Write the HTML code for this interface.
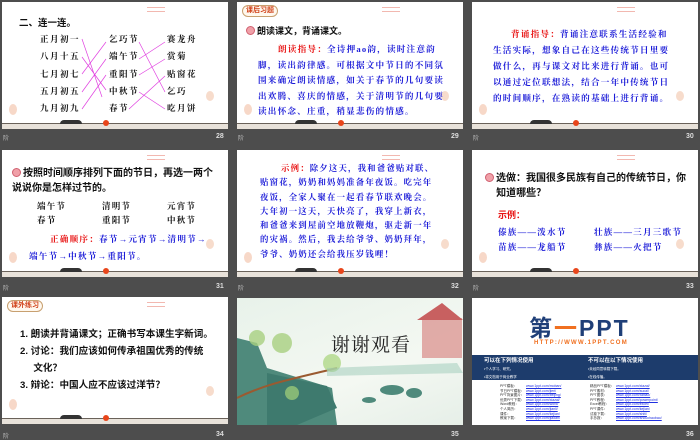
<!DOCTYPE html><html><head><meta charset="utf-8"><style>
body{margin:0;width:700px;height:438px;background:#4d4d4d;position:relative;overflow:hidden;font-family:"Liberation Sans","Noto Sans CJK SC",sans-serif}
.s{position:absolute;width:226px;height:127px;background:#fff;overflow:hidden}
.s .g{position:absolute;left:0;right:0;bottom:0;height:5px;background:#e8e2da;border-top:1px solid #6a625a}
.s .b{position:absolute;left:58px;bottom:5px;width:22px;height:4px;background:#333;border-radius:8px 8px 0 0}
.s .sun{position:absolute;left:101px;bottom:3px;width:6px;height:6px;border-radius:50%;background:#e8451a}
.s .c{position:absolute;left:145px;top:5px;width:18px;height:3px;border-top:1px solid #f2b8b0;border-bottom:1px solid #f2b8b0}
.s .l1{position:absolute;left:7px;bottom:14px;width:8px;height:11px;border-radius:50%;background:#f7d8c8}
.s .l2{position:absolute;right:14px;bottom:28px;width:8px;height:10px;border-radius:50%;background:#f7dccc}
.t{position:absolute;white-space:nowrap;font-size:8px;line-height:13px}
.bl{color:#1c1cd8;font-family:"Liberation Serif","Noto Serif CJK SC",serif;font-weight:bold}
.k{color:#111;font-weight:bold}
.r{color:#e81010;font-weight:bold}
.n{position:absolute;color:#ddd;font-size:7px;font-weight:bold}
.h{position:absolute;color:#bbb;font-size:6px}
.tag{position:absolute;left:5px;top:3px;border:1px solid #c8a070;border-radius:6px;color:#d04018;font-size:7px;font-weight:bold;padding:0 3px;line-height:10px;background:#fff8ee}
.dot{display:inline-block;width:7px;height:7px;border-radius:50%;background:#f0a0a8;border:1px solid #d06070;vertical-align:-1px;margin-right:2px}
.w{font-size:9px;letter-spacing:1.2px}
</style></head><body>

<div class="s" style="left:2px;top:2px">
<div class="c"></div><div class="l1"></div><div class="l2"></div>
<div class="t k" style="left:17px;top:15px;font-size:9.5px">二、连一连。</div>
<div class="t k" style="left:38px;top:29px;line-height:17.3px;font-size:8.5px;letter-spacing:1.5px;font-family:'Liberation Serif','Noto Serif CJK SC',serif">正月初一<br>八月十五<br>七月初七<br>五月初五<br>九月初九</div>
<div class="t k" style="left:107px;top:29px;line-height:17.3px;font-size:8.5px;letter-spacing:1.5px;font-family:'Liberation Serif','Noto Serif CJK SC',serif">乞巧节<br>端午节<br>重阳节<br>中秋节<br>春节</div>
<div class="t k" style="left:165px;top:29px;line-height:17.3px;font-size:8.5px;letter-spacing:1.5px;font-family:'Liberation Serif','Noto Serif CJK SC',serif">赛龙舟<br>赏菊<br>贴窗花<br>乞巧<br>吃月饼</div>
<svg style="position:absolute;left:0;top:0" width="226" height="127" stroke="#e040e0" stroke-width=".7" fill="none">
<path d="M80 37L100 95M80 55L104 88M80 72L104 40M80 90L104 57M80 107L104 73M137 40L163 90M137 57L163 40M137 73L163 57M127 107L163 74M137 90L163 107"/></svg>
<div class="g"></div><div class="b"></div><div class="sun"></div></div>
<div class="h" style="left:3px;top:133px">阶</div><div class="n" style="left:216px;top:133px">28</div>

<div class="s" style="left:237px;top:2px">
<div class="c"></div><div class="l1"></div><div class="l2"></div>
<div class="tag">课后习题</div>
<div class="t k" style="left:9px;top:23px;font-size:9px"><span class="dot"></span>朗读课文，背诵课文。</div>
<div class="t bl w" style="left:21px;top:40px;line-height:15.5px;font-size:8.6px"><span style="padding-left:20px" class="r">朗读指导：</span>全诗押ao韵，读时注意韵<br>脚，读出韵律感。可根据文中节日的不同氛<br>围来确定朗读情感，如关于春节的几句要读<br>出欢腾、喜庆的情感，关于清明节的几句要<br>读出怀念、庄重，稍显悲伤的情感。</div>
<div class="g"></div><div class="b"></div><div class="sun"></div></div>
<div class="h" style="left:238px;top:133px">阶</div><div class="n" style="left:451px;top:133px">29</div>

<div class="s" style="left:472px;top:2px">
<div class="c"></div><div class="l1"></div><div class="l2"></div>
<div class="t bl w" style="left:21px;top:24px;line-height:16px;font-size:8.6px"><span style="padding-left:18px" class="r">背诵指导：</span>背诵注意联系生活经验和<br>生活实际，想象自己在这些传统节日里要<br>做什么，再与课文对比来进行背诵。也可<br>以通过定位联想法，结合一年中传统节日<br>的时间顺序，在熟读的基础上进行背诵。</div>
<div class="g"></div><div class="b"></div><div class="sun"></div></div>
<div class="h" style="left:473px;top:133px">阶</div><div class="n" style="left:686px;top:133px">30</div>

<div class="s" style="left:2px;top:150px">
<div class="c"></div><div class="l1"></div><div class="l2"></div>
<div class="t k" style="left:10px;top:16px;line-height:15px;font-size:10px"><span class="dot"></span>按照时间顺序排列下面的节日，再选一两个<br>说说你是怎样过节的。</div>
<div class="t k" style="left:35px;top:49px;line-height:14px;font-size:8.5px;letter-spacing:1.2px;font-family:'Liberation Serif','Noto Serif CJK SC',serif">端午节<br>春节</div>
<div class="t k" style="left:100px;top:49px;line-height:14px;font-size:8.5px;letter-spacing:1.2px;font-family:'Liberation Serif','Noto Serif CJK SC',serif">清明节<br>重阳节</div>
<div class="t k" style="left:165px;top:49px;line-height:14px;font-size:8.5px;letter-spacing:1.2px;font-family:'Liberation Serif','Noto Serif CJK SC',serif">元宵节<br>中秋节</div>
<div class="t bl w" style="left:48px;top:83px;font-size:8.6px"><span class="r">正确顺序：</span>春节→元宵节→清明节→</div>
<div class="t bl w" style="left:27px;top:100px;font-size:8.6px">端午节→中秋节→重阳节。</div>
<div class="g"></div><div class="b"></div><div class="sun"></div></div>
<div class="h" style="left:3px;top:283px">阶</div><div class="n" style="left:216px;top:283px">31</div>

<div class="s" style="left:237px;top:150px">
<div class="c"></div><div class="l1"></div><div class="l2"></div>
<div class="t bl w" style="left:23px;top:12px;line-height:14.3px;font-size:8.4px"><span style="padding-left:21px" class="r">示例：</span>除夕这天，我和爸爸贴对联、<br>贴窗花，奶奶和妈妈准备年夜饭。吃完年<br>夜饭，全家人聚在一起看春节联欢晚会。<br>大年初一这天，天快亮了，我穿上新衣，<br>和爸爸来到屋前空地放鞭炮，驱走新一年<br>的灾祸。然后，我去给爷爷、奶奶拜年，<br>爷爷、奶奶还会给我压岁钱哩！</div>
<div class="g"></div><div class="b"></div><div class="sun"></div></div>
<div class="h" style="left:238px;top:283px">阶</div><div class="n" style="left:451px;top:283px">32</div>

<div class="s" style="left:472px;top:150px">
<div class="c"></div><div class="l1"></div><div class="l2"></div>
<div class="t k" style="left:13px;top:21px;line-height:15px;font-size:10px"><span class="dot"></span>选做：我国很多民族有自己的传统节日，你<br>&nbsp;&nbsp;&nbsp;&nbsp;知道哪些？</div>
<div class="t r" style="left:26px;top:59px;font-size:9px">示例：</div>
<div class="t bl w" style="left:26px;top:75px;line-height:15px;font-size:8.6px">傣族——泼水节<br>苗族——龙船节</div>
<div class="t bl w" style="left:122px;top:75px;line-height:15px;font-size:8.6px">壮族——三月三歌节<br>彝族——火把节</div>
<div class="g"></div><div class="b"></div><div class="sun"></div></div>
<div class="h" style="left:473px;top:283px">阶</div><div class="n" style="left:686px;top:283px">33</div>

<div class="s" style="left:2px;top:297px">
<div class="c"></div><div class="l1"></div><div class="l2"></div>
<div class="tag">课外练习</div>
<div class="t k" style="left:18px;top:29px;line-height:17px;font-size:9.6px">1. 朗读并背诵课文；正确书写本课生字新词。<br>2. 讨论：我们应该如何传承祖国优秀的传统<br>&nbsp;&nbsp;&nbsp;&nbsp;&nbsp;文化？<br>3. 辩论：中国人应不应该过洋节？</div>
<div class="g"></div><div class="b"></div><div class="sun"></div></div>
<div class="h" style="left:3px;top:431px">阶</div><div class="n" style="left:216px;top:431px">34</div>

<div class="s" style="left:237px;top:298px;background:linear-gradient(160deg,#e8f2ea,#f4f8f2 60%,#e6efe8)">
<svg style="position:absolute;left:0;top:0" width="226" height="127">
<path d="M0 40L20 45L30 70L95 90L100 127L0 127Z" fill="#4f8a7c"/>
<path d="M30 75L90 88L100 110L60 127L30 127Z" fill="#3e7a6e"/>
<path d="M0 100C30 85 60 80 100 70" stroke="#9a5a30" stroke-width="2" fill="none"/>
<circle cx="45" cy="45" r="10" fill="#a8d080" opacity=".8"/><circle cx="20" cy="40" r="8" fill="#a8d080" opacity=".8"/><circle cx="95" cy="65" r="9" fill="#b0d888" opacity=".8"/><circle cx="55" cy="95" r="7" fill="#98c878" opacity=".8"/>
<path d="M90 70L220 65L226 75L90 78Z" fill="#9ccab8" opacity=".5"/>
<rect x="185" y="20" width="40" height="40" fill="#d88a88" opacity=".7"/><path d="M180 22L205 5L226 22Z" fill="#c86060"/>
<ellipse cx="155" cy="92" rx="12" ry="5" fill="#4f8a7c"/><ellipse cx="177" cy="95" rx="8" ry="5" fill="#4f8a7c"/><ellipse cx="132" cy="102" rx="7" ry="3" fill="#4f8a7c"/>
</svg>
<div class="t" style="left:94px;top:34px;font-size:19px;line-height:24px;color:#222;font-family:'Noto Serif CJK SC',serif;letter-spacing:1px">谢谢观看</div>
</div>
<div class="n" style="left:451px;top:431px">35</div>

<div class="s" style="left:472px;top:298px">
<div class="t" style="left:57px;top:19px;font-size:23px;line-height:23px;font-weight:bold;color:#1f3f78;letter-spacing:2px">第<span style="color:#f07020">一</span>PPT</div>
<div class="t" style="left:62px;top:42px;font-size:6px;line-height:7px;color:#f07020;font-weight:bold;letter-spacing:1.3px">HTTP://WWW.1PPT.COM</div>
<div style="position:absolute;left:0;top:57px;width:226px;height:25px;background:#1d3c6c"></div>
<div class="t" style="left:12px;top:59px;color:#fff;font-size:5.5px;line-height:8px;font-weight:bold">可以在下列情况使用<br><span style="font-size:3.5px;font-weight:normal">•个人学习、研究。<br>•将文档用于商业教学</span></div>
<div class="t" style="left:116px;top:59px;color:#fff;font-size:5.5px;line-height:8px;font-weight:bold">不可以在以下情况使用<br><span style="font-size:3.5px;font-weight:normal">•未经同意转载下载。<br>•在线传播。</span></div>
<div class="t" style="left:28px;top:86px;font-size:3.5px;line-height:4.6px;color:#333">PPT模板：<br>节日PPT模板：<br>PPT背景图片：<br>优秀PPT下载：<br>Word教程：<br>个人简历：<br>课件：<br>教案下载：</div>
<div class="t" style="left:54px;top:86px;font-size:3.5px;line-height:4.6px;color:#2030e0;text-decoration:underline">www.1ppt.com/moban/<br>www.1ppt.com/jieri/<br>www.1ppt.com/beijing/<br>www.1ppt.com/xiazai/<br>www.1ppt.com/word/<br>www.1ppt.com/jianli/<br>www.1ppt.com/kejian/<br>www.1ppt.com/jiaoan/</div>
<div class="t" style="left:118px;top:86px;font-size:3.5px;line-height:4.6px;color:#333">精品PPT模板：<br>PPT素材：<br>PPT图表：<br>PPT教程：<br>Excel教程：<br>PPT课件：<br>试卷下载：<br>手抄报：</div>
<div class="t" style="left:144px;top:86px;font-size:3.5px;line-height:4.6px;color:#2030e0;text-decoration:underline">www.1ppt.com/xiazai/<br>www.1ppt.com/sucai/<br>www.1ppt.com/tubiao/<br>www.1ppt.com/powerpoint/<br>www.1ppt.com/excel/<br>www.1ppt.com/kejian/<br>www.1ppt.com/shiti/<br>www.1ppt.com/shouchaobao/</div>
</div>
<div class="n" style="left:686px;top:431px">36</div>
</body></html>
